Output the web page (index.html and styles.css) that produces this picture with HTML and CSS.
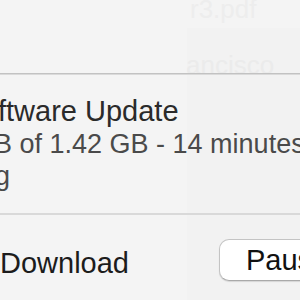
FILE: index.html
```html
<!DOCTYPE html>
<html>
<head>
<meta charset="utf-8">
<link rel="stylesheet" href="styles.css">
</head>
<body>
<div class="window">
  <div class="ghost" aria-hidden="true">
    <span class="g g1">r3.pdf</span>
    <span class="g g2">ancisco</span>
  </div>
  <div class="panel"></div>
  <div class="top"></div>
  <div class="status">
    <div class="title">ftware Update</div>
    <div class="progress">B of 1.42 GB - 14 minutes</div>
    <div class="state">g</div>
  </div>
  <div class="footer">
    <div class="label">Download</div>
    <button class="btn">Pause</button>
  </div>
</div>
</body>
</html>
```
FILE: styles.css
```css
html, body {
  margin: 0;
  padding: 0;
  background: #f4f4f4;
}
body {
  width: 300px;
  height: 300px;
  overflow: hidden;
  font-family: "Liberation Sans", Arial, sans-serif;
}
.window {
  position: relative;
  width: 300px;
  height: 300px;
  overflow: hidden;
}
.panel {
  position: absolute;
  left: 187px;
  top: 28px;
  right: 0;
  bottom: 0;
  background: rgba(0, 0, 0, 0.007);
}
.ghost {
  position: absolute;
  inset: 0;
}
.g {
  position: absolute;
  color: #ededed;
  font-size: 26px;
  white-space: nowrap;
}
.g1 { left: 190px; top: -6px; }
.g2 { left: 186px; top: 50px; }
.top {
  position: relative;
  height: 73px;
  border-bottom: 1px solid #c2c2c2;
  box-shadow: 0 1px 0 #dadada;
}
.status {
  position: relative;
  padding-top: 21px;
  border-bottom: 2px solid #d9d9d9;
  box-sizing: border-box;
  height: 141px;
}
.title, .progress, .state {
  line-height: 32px;
  white-space: nowrap;
}
.title {
  font-size: 29px;
  color: #2a2a2a;
  margin-left: -2px;
}
.progress {
  font-size: 27px;
  color: #4a4a4a;
  margin-left: -6px;
  padding-top: 1px;
}
.state {
  font-size: 27px;
  color: #4a4a4a;
  margin-left: -5px;
}
.footer {
  position: relative;
  display: flex;
  align-items: center;
  justify-content: space-between;
  padding-top: 24px;
}
.label {
  font-size: 29px;
  color: #1c1c1c;
  margin-left: 0;
  padding-top: 6px;
}
.btn {
  width: 110px;
  height: 42px;
  margin-right: -29px;
  border: 1px solid #c4c4c4;
  border-bottom-color: #a9a9a9;
  border-radius: 10px;
  background: #ffffff;
  box-shadow: 0 1px 1px rgba(0, 0, 0, 0.12);
  font-family: "Liberation Sans", Arial, sans-serif;
  font-size: 29px;
  color: #111;
  text-align: left;
  padding: 0 0 0 26px;
  box-sizing: border-box;
}
```
